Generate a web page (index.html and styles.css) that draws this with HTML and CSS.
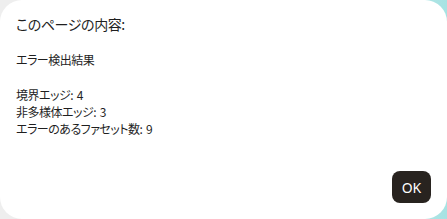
FILE: index.html
```html
<!DOCTYPE html>
<html lang="ja">
<head>
<meta charset="utf-8">
<link rel="stylesheet" href="styles.css">
</head>
<body>
<div class="dialog">
  <div class="title">このページの内容:</div>
  <div class="message">
    <p class="line">エラー検出結果</p>
    <p class="line gap">境界エッジ: 4</p>
    <p class="line">非多様体エッジ: 3</p>
    <p class="line">エラーのあるファセット数: 9</p>
  </div>
  <div class="actions">
    <button class="ok">OK</button>
  </div>
</div>
</body>
</html>
```
FILE: styles.css
```css
html, body {
  margin: 0;
  width: 447px;
  height: 219px;
  overflow: hidden;
}
body {
  background: linear-gradient(90deg, #eeeeee 0%, #eeeeee 60%, #a6e3e3 100%);
  font-family: "Noto Sans CJK JP", "Noto Sans", sans-serif;
  font-feature-settings: "palt";
  color: #1f1f1f;
}
.dialog {
  box-sizing: border-box;
  width: 447px;
  height: 219px;
  background: #ffffff;
  border-radius: 22px;
  padding: 14px 16px 16px 16px;
  display: flex;
  flex-direction: column;
}
.title {
  font-size: 14px;
  line-height: 20px;
  letter-spacing: -0.4px;
  color: #1f1f1f;
}
.message {
  margin-top: 17px;
  font-size: 12px;
  line-height: 17px;
  letter-spacing: -0.5px;
  word-spacing: 1.5px;
  color: #1f1f1f;
}
.line {
  margin: 0;
}
.gap {
  margin-top: 18px;
}
.actions {
  margin-top: auto;
  display: flex;
  justify-content: flex-end;
}
.ok {
  width: 39px;
  height: 32px;
  border: none;
  border-radius: 8px;
  background: #28231f;
  color: #ffffff;
  font-family: "Noto Sans", sans-serif;
  font-size: 14px;
  letter-spacing: 0;
  padding: 0;
  margin-bottom: 0;
}
```
